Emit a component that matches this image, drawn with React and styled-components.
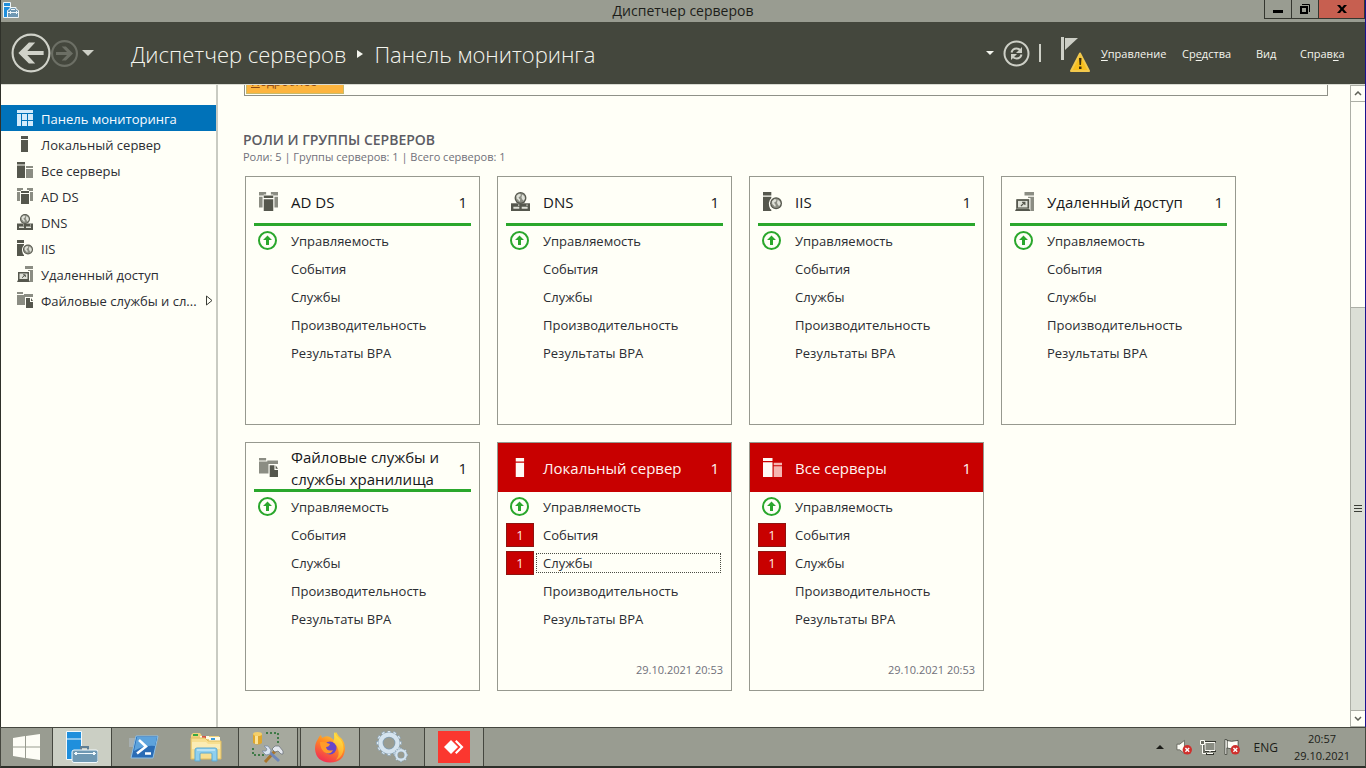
import { useState } from "react";
import styled, { createGlobalStyle, css } from "styled-components";

const GlobalStyle = createGlobalStyle`
  * {
    box-sizing: border-box;
  }

  body {
    margin: 0;
    font-family: "Open Sans", "Noto Sans", sans-serif;
    font-size: 13px;
    color: #2b2d33;
    background: #fffff7;
  }

  button {
    padding: 0;
    border: 0;
    background: none;
    font: inherit;
    color: inherit;
  }

  svg {
    display: block;
    flex-shrink: 0;
  }
`;

const Screen = styled.div`
  display: flex;
  flex-direction: column;
  height: 100vh;
  overflow: hidden;
`;

const AppWindow = styled.div`
  flex: 1;
  min-height: 0;
  display: flex;
  flex-direction: column;
  border-left: 1px solid #2f312a;
  border-right: 1px solid #1a1290;
`;

/* Title bar */

const TitleBar = styled.div`
  display: grid;
  grid-template-columns: 1fr auto 1fr;
  height: 22px;
  background: #999c91;
`;

const TitleIcon = styled.div`
  padding: 2px;
`;

const TitleText = styled.div`
  font-size: 14px;
  line-height: 22px;
  color: #1d1e1a;
`;

const WindowButtons = styled.div`
  display: flex;
  justify-content: flex-end;
  align-items: flex-start;
`;

const WindowButton = styled.button`
  display: flex;
  align-items: center;
  justify-content: center;
  width: ${(props) => (props.$close ? "47px" : "28px")};
  height: 19px;
  margin-left: -1px;
  border: 1px solid #34362f;
  border-top: 0;
  background: ${(props) => (props.$close ? "#c75f50" : "transparent")};
`;

/* Header */

const Header = styled.header`
  display: flex;
  align-items: center;
  height: 63px;
  padding: 0 19px 0 10px;
  background: #44473d;
  border-bottom: 1px solid #d9dbd2;
  color: #f4f5ee;
`;

const HistoryButtons = styled.div`
  display: flex;
  align-items: center;
  width: 120px;
`;

const Breadcrumbs = styled.h1`
  flex: 1;
  display: flex;
  align-items: center;
  gap: 11px;
  margin: 0;
  padding-top: 2px;
  font-size: 22px;
  font-weight: 300;
  white-space: nowrap;
`;

const HeaderTools = styled.div`
  display: flex;
  align-items: center;
  gap: 9px;
  margin-right: 11px;
`;

const HeaderDivider = styled.span`
  width: 2px;
  height: 18px;
  margin-right: 10px;
  background: #cdcfc6;
`;

const Menu = styled.nav`
  display: grid;
  grid-template-columns: 81px 74px 44px 46px;
  font-size: 11px;
  font-weight: 500;
`;

const MenuButton = styled.button`
  text-align: left;
  white-space: nowrap;

  u {
    text-underline-offset: 2px;
  }
`;

/* Body */

const Body = styled.div`
  flex: 1;
  min-height: 0;
  display: flex;
`;

const Sidebar = styled.nav`
  width: 217px;
  flex-shrink: 0;
  padding-top: 20px;
  border-right: 2px solid #c9cbc2;
`;

const SideLink = styled.a`
  display: flex;
  align-items: center;
  gap: 8px;
  height: 26px;
  padding: 0 4px 0 16px;
  font-size: 13px;
  color: inherit;
  text-decoration: none;
  white-space: nowrap;

  ${(props) =>
    props.$active &&
    css`
      background: #0072b9;
      color: #f7fbff;
    `}
`;

const SideLabel = styled.span`
  flex: 1;
  padding-top: 2px;
`;

const Main = styled.main`
  flex: 1;
  min-width: 0;
  overflow: hidden;
  padding: 0 22px 0 25px;
`;

const Notice = styled.div`
  display: flex;
  align-items: flex-end;
  height: 11px;
  margin-left: 1px;
  overflow: hidden;
  padding: 0 1px 1px;
  border: 1px solid #8f9188;
  border-top: 0;
`;

const NoticeLink = styled.a`
  flex-shrink: 0;
  width: 98px;
  padding: 0 4px 2px;
  font-size: 12px;
  line-height: 18px;
  border: 1px solid #c9bb6a;
  background: #fdb53f;
  color: #8e4a14;
  text-decoration: none;
`;

const SectionTitle = styled.h2`
  margin: 34px 0 0;
  font-size: 14px;
  line-height: 19px;
  font-weight: 600;
  color: #5c5c64;
`;

const SectionInfo = styled.p`
  margin: 0;
  font-size: 11px;
  line-height: 16px;
  color: #70707a;
`;

const Tiles = styled.div`
  display: grid;
  grid-template-columns: repeat(auto-fill, 235px);
  gap: 17px;
  padding: 11px 0 0 2px;
`;

const Tile = styled.section`
  display: flex;
  flex-direction: column;
  height: 249px;
  border: 1px solid #97998f;
`;

const TileHeader = styled.header`
  display: flex;
  align-items: center;
  height: 49px;
  margin: 0 8px;
  padding: 3px 4px 0 5px;
  border-bottom: 3px solid #2aa72c;
  line-height: 22px;
  font-size: 15px;
  color: #16171a;

  ${(props) =>
    props.$alert &&
    css`
      margin: 0;
      padding: 0 12px 0 13px;
      border-bottom: 0;
      background: #c80000;
      color: #fff4f0;
    `}
`;

const TileName = styled.h3`
  flex: 1;
  margin: 0 0 0 13px;
  font-size: 15px;
  font-weight: 400;
`;

const TileRows = styled.ul`
  flex: 1;
  margin: 0;
  padding: 1px 10px 0 8px;
  list-style: none;
`;

const TileRow = styled.li`
  display: flex;
  align-items: center;
  gap: 2px;
  height: 28px;
`;

const RowStatus = styled.span`
  display: flex;
  align-items: center;
  justify-content: center;
  width: 28px;
  height: 24px;
`;

const AlertCount = styled(RowStatus)`
  border: 1px solid #8f1410;
  background: #c80000;
  color: #ffe9e4;
`;

const RowButton = styled.button`
  flex: 1;
  height: 20px;
  padding: 0 6px;
  border: 1px dotted ${(props) => (props.$focused ? "#4b4d44" : "transparent")};
  line-height: 18px;
  text-align: left;
`;

const TileTime = styled.time`
  padding: 0 8px 12px;
  font-size: 11px;
  line-height: 16px;
  text-align: right;
  color: #70707a;
`;

/* Scroll bar */

const ScrollBar = styled.div`
  display: flex;
  flex-direction: column;
  width: 15px;
  border-left: 1px solid #adafa6;
`;

const ScrollButton = styled.button`
  display: flex;
  align-items: center;
  justify-content: center;
  height: 17px;
  border: 1px solid #adafa6;
  border-width: 1px 0;
`;

const ScrollTrack = styled.div`
  flex: 1;
  display: grid;
  grid-template-rows: 205fr 404fr;
`;

const ScrollThumb = styled.div`
  grid-row: 2;
  display: flex;
  align-items: center;
  justify-content: center;
  border-top: 1px solid #adafa6;
  background: #dcdfd6;
`;

/* Taskbar */

const TaskBar = styled.footer`
  display: flex;
  height: 41px;
  border: 1px solid #45473f;
  border-bottom: 2px solid #2d2f29;
  background: #999c91;
`;

const StartButton = styled.button`
  display: flex;
  align-items: center;
  justify-content: center;
  width: 51px;
`;

const TaskButtons = styled.div`
  flex: 1;
  display: flex;
  gap: 2px;
`;

const TaskButton = styled.button`
  display: flex;
  align-items: center;
  justify-content: center;
  width: 60px;

  ${(props) =>
    props.$state &&
    css`
      border: 1px solid #45473f;
      border-width: 0 1px;
      background: ${props.$state === "active" ? "#cbcfc4" : "#a6a99e"};
    `}
`;

const Tray = styled.div`
  display: flex;
  align-items: center;
  gap: 8px;
  padding-right: 12px;
  font-size: 12px;
  color: #1b1c18;
`;

const Language = styled.button`
  margin: 0 5px 0 6px;
`;

const Clock = styled.button`
  width: 62px;
  font-size: 11px;
  line-height: 17px;
  text-align: center;
`;

/* Icons */

function Globe({ cx, cy, r, dark, pale }) {
  return (
    <g transform={`translate(${cx} ${cy}) scale(${r / 5})`}>
      <circle r="5" fill={dark} />
      <circle r="4" fill="#8b8d83" />
      <path
        d="M-3.4-1.8-1.200-3.600.4-3-.2-1.400-1.600-.6-1 .6-.2 1.400-.8 3.200-2 1.600-3.200.6zM1.400-3 3.200-1.600 3.800.4 2.600 2.400 1.400 1 .8-.4z"
        fill={pale}
      />
    </g>
  );
}

function RoleIcon({ name, size = 16, dark = "#55574d", mid = "#8b8d83" }) {
  const pale = "#dfe1d8";
  const shapes = {
    dashboard: (
      <path
        d="M0 0h16v3H0zM0 4h4v12H0zM5 4h5v6H5zM11 4h5v6h-5zM5 11h5v5H5zM11 11h5v5h-5z"
        fill="#d4ebfb"
      />
    ),
    local: <path d="M4 0h7v3H4zM4 4h7v12H4z" fill={dark} />,
    all: (
      <>
        <path d="M0 0h8v2.500H0zM0 3.500h8V16H0z" fill={dark} />
        <path d="M9 4h7v2H9zM9 7h7v9H9z" fill={mid} />
      </>
    ),
    adds: (
      <>
        <path
          d="M0 0h6v2H4v1H0zM0 4h3v9H0zM10 0h6v3h-4V2h-2zM13 4h3v9h-3z"
          fill={mid}
        />
        <path d="M4 3h8v2H4zM4 6h8v10H4z" fill={dark} />
      </>
    ),
    dns: (
      <>
        <Globe cx={8} cy={5} r={5} dark={dark} pale={pale} />
        <path d="M0 9.500h16V16H0z" fill={dark} />
        <path d="M2 12.500h5V14H2zM9 12.500h5V14H9zM6 10.500h1v1H6zM13 10.500h1v1h-1z" fill={pale} />
      </>
    ),
    iis: (
      <>
        <path d="M0 0h7v3H0zM0 4h7v1Q3.500 8.500 6 14l1 1v1H0z" fill={dark} />
        <Globe cx={11} cy={9.5} r={5} dark={dark} pale={pale} />
      </>
    ),
    remote: (
      <>
        <path d="M8 0h8v3H8zM11 4h5v12h-3V5h-2z" fill={mid} />
        <path d="M1 6h11v8H1z" fill={dark} />
        <path d="M2.500 7.500h8V13h-8z" fill={pale} />
        <path d="M5 11.800 8 9M6 8.800h2.300V11" stroke={dark} fill="none" />
        <path d="M1 14h11l1 2H0z" fill={dark} />
      </>
    ),
    files: (
      <>
        <path d="M0 0h6v2H0zM0 3h7V2h9v3H8v8H0z" fill={mid} />
        <path d="M9 6h4v4h3v6H9z" fill={dark} />
        <path d="M14 6v3h2z" fill={dark} />
      </>
    ),
  };

  return (
    <svg width={size} height={size} viewBox="0 0 16 16" aria-hidden="true">
      {shapes[name]}
    </svg>
  );
}

function OkIcon() {
  return (
    <svg width="20" height="20" viewBox="0 0 20 20" aria-label="OK">
      <circle cx="9.500" cy="9.500" r="8.500" fill="none" stroke="#2aa72c" strokeWidth="2" />
      <path d="M9.500 4.500 14 9h-3v5H8V9H5z" fill="#2aa72c" />
    </svg>
  );
}

function ServerManagerIcon() {
  return (
    <svg width="32" height="32" viewBox="0 0 32 32" aria-hidden="true">
      <path d="M.5.500h15v28H.5z" fill="#1f8fdc" stroke="#f2f9fd" />
      <path d="M1 8h14" stroke="#f2f9fd" />
      <path d="M15 19v-3h7v3" fill="none" stroke="#5f7f95" strokeWidth="2" />
      <rect x="6" y="19" width="26" height="12.500" rx="2" fill="#6f98b3" stroke="#f2f9fd" />
      <path d="M8 22.500h22" stroke="#f2f9fd" />
      <path d="M10 21v3M28 21v3" stroke="#f2f9fd" strokeWidth="2" />
    </svg>
  );
}

function SmallManagerIcon() {
  return (
    <svg width="17" height="16" viewBox="0 0 17 16" aria-hidden="true">
      <path d="M.5.500h7v15h-7z" fill="#1f8fdc" stroke="#eef6fa" />
      <path d="M1 4.500h6" stroke="#eef6fa" />
      <path d="M4.500 8.500 7 7V5.500h6V7l2.500 1.500v7h-11z" fill="#6f98b3" stroke="#eef6fa" />
      <path d="M5 10.500h10M7.500 9v3M13.500 9v3M8 7.500h4" stroke="#eef6fa" />
    </svg>
  );
}

function Triangle({ width = 10, height = 5, up, color = "#cdcfc6" }) {
  return (
    <svg width={width} height={height} viewBox="0 0 10 5" aria-hidden="true">
      <path d={up ? "M0 5h10L5 0z" : "M0 0h10L5 5z"} fill={color} />
    </svg>
  );
}

function HistoryIcon({ size, color, flip, weight }) {
  return (
    <svg width={size} height={size} viewBox="0 0 38 38" aria-hidden="true">
      <g transform={flip ? "translate(38 0) scale(-1 1)" : undefined}>
        <circle cx="19" cy="19" r="17.500" fill="none" stroke={color} strokeWidth={weight} />
        <path
          d="M7 19 17 9h6l-7.500 8H31v4H15.500l7.500 8h-6z"
          fill={color}
        />
      </g>
    </svg>
  );
}

function RefreshIcon() {
  return (
    <svg width="27" height="27" viewBox="0 0 27 27" aria-hidden="true">
      <circle cx="13.500" cy="13.500" r="12" fill="none" stroke="#cdcfc6" strokeWidth="2" />
      <path
        d="M8.500 12.500q1-4 5-4 2.500 0 4 2M18.500 14.500q-1 4-5 4-2.500 0-4-2"
        fill="none"
        stroke="#cdcfc6"
        strokeWidth="2"
      />
      <path d="M19 7v6h-6zM8 20v-6h6z" fill="#cdcfc6" />
    </svg>
  );
}

function NotificationsIcon() {
  return (
    <svg width="30" height="37" viewBox="0 0 30 37" aria-hidden="true">
      <path d="M1 2h3v23H1zM5 3h13L5 15z" fill="#cdcfc6" />
      <path
        d="M20 18.500 29 36H11z"
        fill="#f7bf1e"
        stroke="#f2c94d"
        strokeWidth="2"
        strokeLinejoin="round"
      />
      <path d="M19 23h2.500l-.5 7h-1.500zM19 31.500h2.500V34H19z" fill="#3d3010" />
    </svg>
  );
}

function PowerShellIcon() {
  return (
    <svg width="30" height="24" viewBox="0 0 30 24" aria-hidden="true">
      <path d="M0 3h6L4 12H0z" fill="#b1bdc4" opacity=".6" />
      <path d="M7 1h22l-5 22H2z" fill="#2a6cb5" stroke="#8dc0e6" strokeLinejoin="round" />
      <path d="M8 2h20l-2 9Q15 10 5 16z" fill="#5ea3dc" />
      <path d="m10 5 7 6.500L8 18.500M16 18.500h6" fill="none" stroke="#fff" strokeWidth="2.500" />
    </svg>
  );
}

function ExplorerIcon() {
  return (
    <svg width="32" height="30" viewBox="0 0 32 30" aria-hidden="true">
      <path d="M1 3 3 1h7l2 3h17v5H1z" fill="#efd27c" />
      <path d="M3 2h5v2H3z" fill="#36a843" />
      <path d="M10 4h9v3h-9z" fill="#fffbe8" />
      <path d="M12 4h4v2h-4z" fill="#d9534a" />
      <path d="M19 5h11v4H19z" fill="#fffbe8" />
      <path d="M21 6h4v2h-4z" fill="#3d9bd8" />
      <path d="M1 6h14l3 3h13v18H1z" fill="#f7df91" stroke="#e0bd61" />
      <path d="M2 10h14l2 2h12v5H2z" fill="#fbecb4" />
      <path
        d="M5 29V18q0-2 2-2h18q2 0 2 2v11h-5v-7q0-1-1-1H11q-1 0-1 1v7z"
        fill="#8fd0ee"
        stroke="#5da9d2"
      />
      <path d="M7 18h18" stroke="#dff4fd" />
    </svg>
  );
}

function AdminToolsIcon() {
  return (
    <svg width="32" height="32" viewBox="0 0 32 32" aria-hidden="true">
      <path d="M1 3v9q4.500 3 9 0V3z" fill="#dfa62c" />
      <path d="M3 4v9h3V4z" fill="#fbe398" />
      <ellipse cx="5.500" cy="3" rx="4.500" ry="2" fill="#f5cf68" />
      <path
        d="M14 2h12v10M1 17v7h11"
        fill="none"
        stroke="#1e6b2c"
        strokeWidth="1.500"
        strokeDasharray="2 2"
      />
      <path d="m13 31 12-13" stroke="#a9742c" strokeWidth="3" />
      <path
        d="m20 18 3-3 4 0 4 5 0 3-2 0-3-3-3 1z"
        fill="#e4e8ee"
        stroke="#70767f"
        strokeWidth=".8"
      />
      <path d="m15 19 12 11" stroke="#6e86b8" strokeWidth="3" />
      <path
        d="m12 15 4 0 3 4-1 4-4 1-4-4 4 0 1-2z"
        fill="#dbe5f2"
        stroke="#7b8ba5"
        strokeWidth=".8"
      />
    </svg>
  );
}

function FirefoxIcon() {
  return (
    <svg width="32" height="32" viewBox="0 0 32 32" aria-hidden="true">
      <defs>
        <linearGradient id="fox" x1=".8" y1="0" x2=".3" y2="1">
          <stop offset="0" stopColor="#ffe03c" />
          <stop offset=".45" stopColor="#ff8b22" />
          <stop offset="1" stopColor="#f22c55" />
        </linearGradient>
        <linearGradient id="flame" x1=".7" y1="0" x2=".5" y2="1">
          <stop offset="0" stopColor="#fff04a" />
          <stop offset="1" stopColor="#ff9a26" />
        </linearGradient>
      </defs>
      <path
        d="M4 8q1-3 3-4l1 3q4-3 8-1l4 3q0-6 2-8 2 4 6 7 3 4 3 9 0 14-15 14.500Q2 31 1 18q0-6 3-10z"
        fill="url(#fox)"
      />
      <path d="M20 1q2 4 6 7 5 6 3 13-2 6-7 8 4-5 2-11-1-4-5-6 2-5 1-11z" fill="url(#flame)" />
      <circle cx="16" cy="17" r="6.500" fill="#6847c9" />
      <path d="M6 11q5-1 7 1l3 1q-1 3-4 3 1 5 7 3-3 6-9 2-4-4-4-10z" fill="#ff9b28" />
    </svg>
  );
}

function Gear({ cx, cy, r, teeth }) {
  return (
    <g transform={`translate(${cx} ${cy})`}>
      {Array.from({ length: teeth }, (_, i) => (
        <rect
          key={i}
          x={-r * 0.13}
          y={-r}
          width={r * 0.26}
          height={r * 0.4}
          fill="#dce8f1"
          stroke="#7994a8"
          strokeWidth=".5"
          transform={`rotate(${(360 / teeth) * i})`}
        />
      ))}
      <circle r={r * 0.66} fill="none" stroke="#7f9db4" strokeWidth={r * 0.42} />
      <circle r={r * 0.68} fill="none" stroke="#d5e4ef" strokeWidth={r * 0.34} />
    </g>
  );
}

function ServicesIcon() {
  return (
    <svg width="32" height="32" viewBox="0 0 32 32" aria-hidden="true">
      <Gear cx={13} cy={12} r={12.5} teeth={12} />
      <Gear cx={25} cy={24} r={7} teeth={8} />
    </svg>
  );
}

function AnyDeskIcon() {
  return (
    <svg width="32" height="32" viewBox="0 0 32 32" aria-hidden="true">
      <path d="M0 0h32v32H0z" fill="#fb372f" />
      <path d="m6 16 7-7 7 7-7 7z" fill="#fff" />
      <path d="m17 10.500 1.500-1.500 7 7-7 7-1.500-1.500 5.500-5.500z" fill="#fff" />
    </svg>
  );
}

function ErrorBadge() {
  return (
    <>
      <circle cx="12" cy="11" r="5" fill="#d02f2c" />
      <path d="m10 9 4 4m0-4-4 4" stroke="#fff" strokeWidth="1.500" />
    </>
  );
}

const rowNames = [
  "Управляемость",
  "События",
  "Службы",
  "Производительность",
  "Результаты BPA",
];

const sideItems = [
  { icon: "dashboard", label: "Панель мониторинга" },
  { icon: "local", label: "Локальный сервер" },
  { icon: "all", label: "Все серверы" },
  { icon: "adds", label: "AD DS" },
  { icon: "dns", label: "DNS" },
  { icon: "iis", label: "IIS" },
  { icon: "remote", label: "Удаленный доступ" },
  { icon: "files", label: "Файловые службы и сл...", expandable: true },
];

const tiles = [
  { icon: "adds", name: "AD DS" },
  { icon: "dns", name: "DNS" },
  { icon: "iis", name: "IIS" },
  { icon: "remote", name: "Удаленный доступ" },
  { icon: "files", name: "Файловые службы и службы хранилища" },
  {
    icon: "local",
    name: "Локальный сервер",
    alerts: { События: 1, Службы: 1 },
    time: "29.10.2021 20:53",
  },
  {
    icon: "all",
    name: "Все серверы",
    alerts: { События: 1, Службы: 1 },
    time: "29.10.2021 20:53",
  },
];

const tasks = [
  { name: "Диспетчер серверов", state: "active", icon: <ServerManagerIcon /> },
  { name: "Windows PowerShell", icon: <PowerShellIcon /> },
  { name: "Проводник", icon: <ExplorerIcon /> },
  { name: "Администрирование", state: "open", icon: <AdminToolsIcon /> },
  { name: "Firefox", state: "open", icon: <FirefoxIcon /> },
  { name: "Настройка", icon: <ServicesIcon /> },
  { name: "AnyDesk", state: "open", icon: <AnyDeskIcon /> },
];

function ServerTile({ tile, focusedRow, onFocusRow }) {
  const { icon, name, alerts, time } = tile;
  const colors = alerts ? { dark: "#fffaf5", mid: "#f5b5b0" } : {};

  return (
    <Tile>
      <TileHeader $alert={Boolean(alerts)}>
        <RoleIcon name={icon} size={19} {...colors} />
        <TileName>{name}</TileName>
        <span>1</span>
      </TileHeader>
      <TileRows>
        {rowNames.map((row, i) => (
          <TileRow key={row}>
            {alerts?.[row] ? (
              <AlertCount>{alerts[row]}</AlertCount>
            ) : (
              <RowStatus>{i === 0 && <OkIcon />}</RowStatus>
            )}
            <RowButton
              $focused={focusedRow === `${name}/${row}`}
              onClick={() => onFocusRow(`${name}/${row}`)}
            >
              {row}
            </RowButton>
          </TileRow>
        ))}
      </TileRows>
      {time && <TileTime>{time}</TileTime>}
    </Tile>
  );
}

export default function App() {
  const [page, setPage] = useState("dashboard");
  const [focusedRow, setFocusedRow] = useState("Локальный сервер/Службы");

  return (
    <Screen>
      <GlobalStyle />
      <AppWindow>
        <TitleBar>
          <TitleIcon>
            <SmallManagerIcon />
          </TitleIcon>
          <TitleText>Диспетчер серверов</TitleText>
          <WindowButtons>
            <WindowButton aria-label="Свернуть">
              <svg width="10" height="10" viewBox="0 0 10 10">
                <path d="M0 6h10v3H0z" />
              </svg>
            </WindowButton>
            <WindowButton aria-label="Свернуть в окно">
              <svg width="10" height="10" viewBox="0 0 10 10">
                <path d="M1 3h6v6H1z" fill="none" stroke="#000" strokeWidth="2" />
                <path d="M2 .5h7.500V8" fill="none" stroke="#000" />
              </svg>
            </WindowButton>
            <WindowButton $close aria-label="Закрыть">
              <svg width="10" height="8" viewBox="0 0 10 8">
                <path d="M0 0h3l2 2.500L7 0h3L6.500 4 10 8H7L5 5.500 3 8H0l3.500-4z" />
              </svg>
            </WindowButton>
          </WindowButtons>
        </TitleBar>

        <Header>
          <HistoryButtons>
            <button aria-label="Назад">
              <HistoryIcon size={40} color="#d0d2c9" weight={2} />
            </button>
            <button aria-label="Вперед" disabled>
              <HistoryIcon size={27} color="#6c6f65" weight={3} flip />
            </button>
            <button aria-label="Журнал">
              <Triangle width={20} height={6} />
            </button>
          </HistoryButtons>
          <Breadcrumbs>
            <span>Диспетчер серверов</span>
            <svg width="6" height="8" viewBox="0 0 6 8" aria-hidden="true">
              <path d="M0 0v8l6-4z" fill="#f4f5ee" />
            </svg>
            <span>Панель мониторинга</span>
          </Breadcrumbs>
          <HeaderTools>
            <button aria-label="Параметры обновления">
              <Triangle width={8} height={4} color="#f4f5ee" />
            </button>
            <button aria-label="Обновить">
              <RefreshIcon />
            </button>
            <HeaderDivider />
            <button aria-label="Уведомления">
              <NotificationsIcon />
            </button>
          </HeaderTools>
          <Menu>
            <MenuButton>
              <u>У</u>правление
            </MenuButton>
            <MenuButton>
              Ср<u>е</u>дства
            </MenuButton>
            <MenuButton>
              Ви<u>д</u>
            </MenuButton>
            <MenuButton>
              Справ<u>к</u>а
            </MenuButton>
          </Menu>
        </Header>

        <Body>
          <Sidebar>
            {sideItems.map((item) => (
              <SideLink
                key={item.icon}
                href={`#${item.icon}`}
                $active={page === item.icon}
                onClick={() => setPage(item.icon)}
              >
                <RoleIcon name={item.icon} />
                <SideLabel>{item.label}</SideLabel>
                {item.expandable && (
                  <svg width="9" height="11" viewBox="0 0 9 11" aria-hidden="true">
                    <path d="M1.500 1v9L7 5.500z" fill="none" stroke="#3b3d36" />
                  </svg>
                )}
              </SideLink>
            ))}
          </Sidebar>

          <Main>
            <Notice>
              <NoticeLink href="#more">
                <u>П</u>одробнее
              </NoticeLink>
            </Notice>
            <SectionTitle>РОЛИ И ГРУППЫ СЕРВЕРОВ</SectionTitle>
            <SectionInfo>
              Роли: 5 | Группы серверов: 1 | Всего серверов: 1
            </SectionInfo>
            <Tiles>
              {tiles.map((tile) => (
                <ServerTile
                  key={tile.name}
                  tile={tile}
                  focusedRow={focusedRow}
                  onFocusRow={setFocusedRow}
                />
              ))}
            </Tiles>
          </Main>

          <ScrollBar>
            <ScrollButton aria-label="Вверх">
              <svg width="8" height="5" viewBox="0 0 8 5">
                <path d="m1 4 3-3 3 3" fill="none" stroke="#5f6158" strokeWidth="1.500" />
              </svg>
            </ScrollButton>
            <ScrollTrack>
              <ScrollThumb>
                <svg width="8" height="8" viewBox="0 0 8 8" aria-hidden="true">
                  <path d="M0 0h8v1H0zM0 3h8v1H0zM0 6h8v1H0z" fill="#3b3d36" />
                </svg>
              </ScrollThumb>
            </ScrollTrack>
            <ScrollButton aria-label="Вниз">
              <svg width="8" height="5" viewBox="0 0 8 5">
                <path d="m1 1 3 3 3-3" fill="none" stroke="#5f6158" strokeWidth="1.500" />
              </svg>
            </ScrollButton>
          </ScrollBar>
        </Body>
      </AppWindow>

      <TaskBar>
        <StartButton aria-label="Пуск">
          <svg width="28" height="26" viewBox="0 0 28 26">
            <path
              d="M0 4 12 2v10.500H0zM13 2l14-2v12.500H13zM0 13.500h12V24L0 22zM13 13.500h14V26l-14-2z"
              fill="#fdfdf6"
            />
          </svg>
        </StartButton>
        <TaskButtons>
          {tasks.map((task) => (
            <TaskButton key={task.name} $state={task.state} aria-label={task.name}>
              {task.icon}
            </TaskButton>
          ))}
        </TaskButtons>
        <Tray>
          <button aria-label="Скрытые значки">
            <Triangle width={16} height={4} up color="#1b1c18" />
          </button>
          <svg width="16" height="16" viewBox="0 0 17 16" aria-label="Звук">
            <path d="M1 5h3l5-4v14l-5-4H1z" fill="#fdfdf6" stroke="#55574d" strokeWidth=".8" />
            <ErrorBadge />
          </svg>
          <svg width="16" height="16" viewBox="0 0 16 16" aria-label="Сеть">
            <path d="M5 3.500h10v8H5z" fill="#999c91" stroke="#33352e" strokeWidth="3" />
            <path d="M10 12v3M6 15h8" stroke="#33352e" strokeWidth="2" />
            <path d="M5 3.500h10v8H5z" fill="#8b8e84" stroke="#fdfdf6" />
            <path d="M7 14.500h6M10 12v2" stroke="#fdfdf6" />
            <path d="M.5 1.500h4v4h-4zM2.500 6v8.500H6" fill="#6a6c62" stroke="#fdfdf6" />
          </svg>
          <svg width="16" height="16" viewBox="0 0 17 16" aria-label="Центр поддержки">
            <path
              d="M1 0h2v1l5 1 7-1v8l-7 1-5-1v7H1z"
              fill="#fdfdf6"
              stroke="#33352e"
              strokeWidth=".8"
            />
            <path d="M3.500 1v8" stroke="#33352e" strokeWidth=".8" />
            <ErrorBadge />
          </svg>
          <Language>ENG</Language>
          <Clock>
            20:57
            <br />
            29.10.2021
          </Clock>
        </Tray>
      </TaskBar>
    </Screen>
  );
}
